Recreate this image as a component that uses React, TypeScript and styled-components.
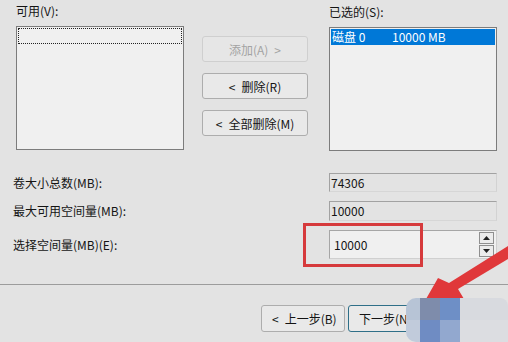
import React from 'react';
import styled, { createGlobalStyle } from 'styled-components';

const GlobalStyle = createGlobalStyle`
  html, body {
    margin: 0;
    padding: 0;
    background: #e3e3e3;
  }
  * {
    box-sizing: border-box;
  }
`;

const FONT = `"Noto Sans CJK SC", "Liberation Sans", sans-serif`;

// Layout
const Page = styled.div`
  position: relative;
  width: 508px;
  height: 342px;
  overflow: hidden;
  background: #e3e3e3;
  font-family: ${FONT};
  font-size: 12px;
  color: #141414;
`;

const TopRow = styled.div`
  display: flex;
  padding: 3px 0 0 16px;
`;

const ListColumn = styled.div<{ $offset?: number }>`
  width: 168px;
  padding-top: ${p => p.$offset || 0}px;
`;

const ColumnLabel = styled.div`
  height: 16px;
  line-height: 16px;
  margin-bottom: 7px;
`;

const ListBox = styled.div`
  height: 124px;
  background: #f0f0f0;
  border: 1px solid #7c7c7c;
  padding: 1px;
`;

const FocusItem = styled.div`
  height: 16px;
  border: 1px dotted #222;
`;

const SelectedItem = styled.div`
  display: flex;
  height: 16px;
  line-height: 16px;
  background: #0078d7;
  color: #fff;
  padding-left: 1px;
`;

const ItemName = styled.span`
  width: 60px;
`;

const ButtonColumn = styled.div`
  display: flex;
  flex-direction: column;
  gap: 11px;
  width: 106px;
  margin: 0 21px 0 18px;
  padding-top: 33px;
`;

const DialogButton = styled.button<{ $default?: boolean }>`
  height: ${p => (p.$default === undefined ? 26 : 27)}px;
  padding: 0;
  font-family: ${FONT};
  font-size: 12px;
  color: #141414;
  background: #e9e9e9;
  border: 1px solid ${p => (p.$default ? '#2f6f88' : '#adadad')};
  border-radius: 3px;
  white-space: nowrap;

  &:disabled {
    color: #a3a3a3;
    border-color: #cfcfcf;
    background: #e6e6e6;
  }
`;

const FieldGrid = styled.div`
  display: grid;
  grid-template-columns: 316px 168px;
  grid-template-rows: 19px 20px 29px;
  row-gap: 9px;
  align-items: center;
  margin-top: 22px;
  padding-left: 13px;
`;

const FieldLabel = styled.div`
  line-height: 16px;
`;

const ReadOnlyField = styled.div`
  height: 100%;
  line-height: 18px;
  padding-left: 1px;
  border-top: 1px solid #a2a2a2;
  border-left: 1px solid #a2a2a2;
  border-right: 1px solid #d2d2d2;
  border-bottom: 1px solid #d6d6d6;
`;

const SpinBox = styled.div`
  display: flex;
  align-items: center;
  height: 100%;
  background: #f0f0f0;
  border-top: 1px solid #a6a6a6;
  border-left: 1px solid #a6a6a6;
  border-right: 1px solid #d0d0d0;
  border-bottom: 1px solid #d0d0d0;
  padding: 0 2px 0 4px;
`;

const SpinValue = styled.span`
  flex: 1;
`;

const SpinButtons = styled.div`
  display: flex;
  flex-direction: column;
  width: 15px;
`;

const SpinButton = styled.div`
  display: flex;
  align-items: center;
  justify-content: center;
  height: 12px;
  background: #ececec;
  border: 1px solid #8f8f8f;

  & + & {
    margin-top: 1px;
  }
`;

const Separator = styled.div`
  height: 1px;
  margin-top: 25px;
  background: #9c9c9c;
`;

const BottomRow = styled.div`
  display: flex;
  gap: 3px;
  margin-top: 20px;
  padding-left: 261px;
`;

const WideButton = styled(DialogButton)<{ $width: number }>`
  width: ${p => p.$width}px;
  text-align: left;
  padding-left: 10px;
`;

// Annotations on top of the screenshot
const RedBox = styled.div`
  position: absolute;
  left: 303px;
  top: 223px;
  width: 120px;
  height: 44px;
  border: 3px solid #d63a3c;
`;

const ArrowLayer = styled.svg`
  position: absolute;
  left: 0;
  top: 0;
`;

const Mosaic = styled.div`
  position: absolute;
  left: 406px;
  top: 298px;
  display: grid;
  grid-template-columns: 14px 20px 20px 48px;
  grid-template-rows: 22px 22px;
`;

const MosaicCell = styled.div<{ $color: string; $round?: string }>`
  background: ${p => p.$color};
  border-radius: ${p => p.$round || '0'};
`;

const MOSAIC = [
  { color: '#b7c4d6', round: '10px 0 0 0' },
  { color: '#7e8cab' },
  { color: '#6e8fc6' },
  { color: '#d8dadf', round: '0 8px 0 0' },
  { color: '#c1cbdb', round: '0 0 0 10px' },
  { color: '#6f8cc3' },
  { color: '#92a8cf' },
  { color: '#dcdde1' },
];

const Triangle = ({ up }: { up?: boolean }) => (
  <svg width="7" height="4" viewBox="0 0 7 4">
    <path d={up ? 'M0 4 L3.5 0 L7 4 Z' : 'M0 0 L3.5 4 L7 0 Z'} fill="#222" />
  </svg>
);

const App: React.FC = () => {
  return (
    <Page>
      <GlobalStyle />
      <TopRow>
        <ListColumn>
          <ColumnLabel>可用(V):</ColumnLabel>
          <ListBox>
            <FocusItem />
          </ListBox>
        </ListColumn>

        <ButtonColumn>
          <DialogButton disabled>添加(A)&ensp;&gt;</DialogButton>
          <DialogButton>&lt;&ensp;删除(R)</DialogButton>
          <DialogButton>&lt;&ensp;全部删除(M)</DialogButton>
        </ButtonColumn>

        <ListColumn $offset={1}>
          <ColumnLabel>已选的(S):</ColumnLabel>
          <ListBox>
            <SelectedItem>
              <ItemName>磁盘 0</ItemName>
              <span>10000 MB</span>
            </SelectedItem>
          </ListBox>
        </ListColumn>
      </TopRow>

      <FieldGrid>
        <FieldLabel>卷大小总数(MB):</FieldLabel>
        <ReadOnlyField>74306</ReadOnlyField>
        <FieldLabel>最大可用空间量(MB):</FieldLabel>
        <ReadOnlyField>10000</ReadOnlyField>
        <FieldLabel>选择空间量(MB)(E):</FieldLabel>
        <SpinBox>
          <SpinValue>10000</SpinValue>
          <SpinButtons>
            <SpinButton>
              <Triangle up />
            </SpinButton>
            <SpinButton>
              <Triangle />
            </SpinButton>
          </SpinButtons>
        </SpinBox>
      </FieldGrid>

      <Separator />

      <BottomRow>
        <WideButton $width={84} $default={false}>&lt;&ensp;上一步(B)</WideButton>
        <WideButton $width={84} $default>下一步(N)</WideButton>
      </BottomRow>

      <RedBox />
      <ArrowLayer width="508" height="342" viewBox="0 0 508 342">
        <polygon
          points="508,246 508,259 458,289 464,299 426,299 438,278 449,283"
          fill="#e0383a"
        />
      </ArrowLayer>
      <Mosaic>
        {MOSAIC.map((c, i) => (
          <MosaicCell key={i} $color={c.color} $round={c.round} />
        ))}
      </Mosaic>
    </Page>
  );
};

export default App;
